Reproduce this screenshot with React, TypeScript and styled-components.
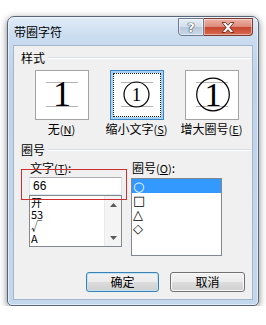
import React from 'react';
import styled, { createGlobalStyle } from 'styled-components';

const Global = createGlobalStyle`
  html, body { margin: 0; padding: 0; background: #fff; }
  body {
    font-family: "Noto Sans CJK SC", "Liberation Sans", sans-serif;
    font-size: 12px;
    color: #000;
  }
  * { box-sizing: border-box; }
`;

const Page = styled.div`
  padding: 16px 0 0 7px;
`;

const Window = styled.div`
  width: 252px;
  height: 290px;
  border: 1px solid #56657a;
  border-radius: 7px 7px 5px 5px;
  background: linear-gradient(180deg, #e0ebf7 0px, #cadcf0 20px, #bed3ea 60px, #c3d7ed 100%);
  box-shadow: 0 2px 7px rgba(0, 0, 0, 0.5), inset 0 0 0 1px rgba(255, 255, 255, 0.55);
  display: flex;
  flex-direction: column;
  padding: 0 5px 5px 5px;
`;

const TitleBar = styled.div`
  height: 28px;
  display: flex;
  align-items: flex-start;
`;

const Title = styled.div`
  margin: 7px 0 0 1px;
  line-height: 16px;
  font-size: 12px;
  color: #000;
`;

const Caption = styled.div`
  margin: 1px 0 0 auto;
  display: flex;
`;

const CapButton = styled.div<{ $kind: 'help' | 'close' }>`
  height: 18px;
  width: ${p => (p.$kind === 'help' ? 26 : 49)}px;
  border: 1px solid ${p => (p.$kind === 'help' ? '#6b7c90' : '#7d3a30')};
  border-left-width: ${p => (p.$kind === 'help' ? 1 : 0)}px;
  border-radius: ${p => (p.$kind === 'help' ? '0 0 0 4px' : '0 0 4px 0')};
  background: ${p =>
    p.$kind === 'help'
      ? 'linear-gradient(180deg, #e6edf5 0%, #d3dee9 50%, #b8c8da 50%, #c9d8e8 100%)'
      : 'linear-gradient(180deg, #eab1a5 0%, #dd8a79 50%, #c7452e 50%, #d66a50 100%)'};
  box-shadow: inset 0 0 0 1px rgba(255, 255, 255, 0.45);
  display: flex;
  align-items: center;
  justify-content: center;
  font-family: "DejaVu Sans", sans-serif;
  font-weight: bold;
  font-size: 13px;
  line-height: 1;
  color: #fff;
  text-shadow: 0 0 1px #2f3d50, 0 0 1px #2f3d50, 0 0 1px #2f3d50;
`;

const Client = styled.div`
  flex: 1;
  background: #f0f0f0;
  border: 1px solid #a3b6cb;
  display: flex;
  flex-direction: column;
  padding: 0 0 7px 0;
`;

const SectionHeader = styled.div<{ $top: number }>`
  margin-top: ${p => p.$top}px;
  padding-left: 7px;
  margin-right: 1px;
  display: flex;
  align-items: center;
  gap: 3px;
  line-height: 16px;
  &::after {
    content: '';
    flex: 1;
    height: 0;
    border-top: 1px solid #d5dfe5;
    border-bottom: 1px solid #ffffff;
  }
`;

const StyleRow = styled.div`
  margin-top: 4px;
  padding-left: 10px;
  display: flex;
`;

const StyleCol = styled.div`
  width: 75px;
  display: flex;
  flex-direction: column;
  align-items: center;
`;

const StyleBox = styled.div<{ $selected?: boolean }>`
  width: 54px;
  height: 50px;
  background: #fff;
  border: 1px solid ${p => (p.$selected ? '#3d86c6' : '#a3a3a3')};
  box-shadow: ${p => (p.$selected ? 'inset 0 0 0 2px #a8d2f4' : 'none')};
  outline: ${p => (p.$selected ? '1px dotted #1a1a1a' : 'none')};
  outline-offset: -4px;
  display: flex;
  align-items: center;
  justify-content: center;
`;

const StyleLabel = styled.div`
  margin-top: 1px;
  line-height: 16px;
  white-space: nowrap;
  u { text-decoration: underline; }
`;

const Mn = styled.span`
  font-size: 11px;
`;

const CircleRow = styled.div`
  margin-top: 2px;
  padding-left: 15px;
  display: flex;
  gap: 9px;
  align-items: flex-start;
`;

const FieldCol = styled.div<{ $w: number }>`
  position: relative;
  width: ${p => p.$w}px;
  display: flex;
  flex-direction: column;
`;

const FieldLabel = styled.div`
  line-height: 16px;
  padding-left: 1px;
`;

const TextInput = styled.div`
  margin-top: 1px;
  height: 18px;
  border: 1px solid #abadb3;
  border-right-color: #dbdfe6;
  border-bottom-color: #e3e9ef;
  border-left-color: #e2e3ea;
  background: #fff;
  padding-left: 3px;
  line-height: 16px;
  font-family: "Liberation Sans", sans-serif;
  font-size: 12px;
`;

const ListBox = styled.div<{ $h: number; $top: number }>`
  margin-top: ${p => p.$top}px;
  height: ${p => p.$h}px;
  border: 1px solid #828790;
  background: #fff;
  display: flex;
  overflow: hidden;
`;

const Items = styled.div`
  flex: 1;
  display: flex;
  flex-direction: column;
`;

const Item = styled.div<{ $h: number; $selected?: boolean }>`
  height: ${p => p.$h}px;
  line-height: ${p => p.$h}px;
  padding-left: 1px;
  font-size: 11px;
  white-space: nowrap;
  background: ${p => (p.$selected ? '#3399ff' : 'transparent')};
  color: ${p => (p.$selected ? '#fff' : '#000')};
`;

const Sym = styled.span`
  font-family: "DejaVu Sans", sans-serif;
  font-size: 13px;
`;

const ScrollBar = styled.div`
  width: 17px;
  background: #f4f4f4;
  border-left: 1px solid #eaeaea;
  display: flex;
  flex-direction: column;
  justify-content: space-between;
`;

const ScrollBtn = styled.div`
  height: 17px;
  display: flex;
  align-items: center;
  justify-content: center;
`;

const Annotation = styled.div`
  position: absolute;
  left: -8px;
  top: 9px;
  width: 106px;
  height: 31px;
  border: 1px solid #cf2f2f;
  pointer-events: none;
`;

const ButtonRow = styled.div`
  margin-top: auto;
  padding-right: 7px;
  display: flex;
  justify-content: flex-end;
  gap: 11px;
`;

const Button = styled.div<{ $w: number; $default?: boolean }>`
  width: ${p => p.$w}px;
  height: 20px;
  border: 1px solid ${p => (p.$default ? '#3c7fb1' : '#707070')};
  border-radius: 3px;
  background: linear-gradient(180deg, #f2f2f2 0%, #ebebeb 50%, #dddddd 50%, #cfcfcf 100%);
  box-shadow: inset 0 0 0 1px ${p => (p.$default ? '#bfe4f7' : '#fafafa')};
  display: flex;
  align-items: center;
  justify-content: center;
  line-height: 16px;
`;

const Preview: React.FC<{ kind: 'none' | 'small' | 'big' }> = ({ kind }) => (
  <svg width="52" height="48" viewBox="0 0 52 48">
    <line x1="10" y1="11.5" x2="42" y2="11.5" stroke="#b4b4b4" strokeWidth="1" />
    <line x1="10" y1="35.5" x2="42" y2="35.5" stroke="#b4b4b4" strokeWidth="1" />
    {kind === 'small' && <circle cx="25.5" cy="23.5" r="12.5" fill="none" stroke="#000" strokeWidth="1.2" />}
    {kind === 'big' && <circle cx="27" cy="23.5" r="16.3" fill="none" stroke="#000" strokeWidth="1.2" />}
    <text
      x={kind === 'big' ? 27 : kind === 'small' ? 25.5 : 26}
      y={kind === 'small' ? 29.5 : kind === 'big' ? 34.5 : 35}
      textAnchor="middle"
      fontFamily="Liberation Serif, serif"
      fontSize={kind === 'small' ? 19 : kind === 'big' ? 34 : 36}
      fill="#000"
    >
      1
    </text>
  </svg>
);

const Arrow: React.FC<{ up?: boolean }> = ({ up }) => (
  <svg width="7" height="4" viewBox="0 0 7 4">
    <path d={up ? 'M0 4 L3.5 0 L7 4 Z' : 'M0 0 L3.5 4 L7 0 Z'} fill="#5a5a5a" />
  </svg>
);

const CloseGlyph: React.FC = () => (
  <svg width="14" height="11" viewBox="0 0 14 11">
    <path
      d="M1 0.5 H4.5 L7 3.3 L9.5 0.5 H13 L8.8 5.5 L13 10.5 H9.5 L7 7.7 L4.5 10.5 H1 L5.2 5.5 Z"
      fill="#fff"
      stroke="#6b2a20"
      strokeWidth="0.9"
      strokeLinejoin="round"
    />
  </svg>
);

export default function App() {
  return (
    <>
      <Global />
      <Page>
        <Window>
          <TitleBar>
            <Title>带圈字符</Title>
            <Caption>
              <CapButton $kind="help">?</CapButton>
              <CapButton $kind="close">
                <CloseGlyph />
              </CapButton>
            </Caption>
          </TitleBar>
          <Client>
            <SectionHeader $top={4}>样式</SectionHeader>
            <StyleRow>
              <StyleCol>
                <StyleBox>
                  <Preview kind="none" />
                </StyleBox>
                <StyleLabel>
                  无<Mn>(<u>N</u>)</Mn>
                </StyleLabel>
              </StyleCol>
              <StyleCol>
                <StyleBox $selected>
                  <Preview kind="small" />
                </StyleBox>
                <StyleLabel>
                  缩小文字<Mn>(<u>S</u>)</Mn>
                </StyleLabel>
              </StyleCol>
              <StyleCol>
                <StyleBox>
                  <Preview kind="big" />
                </StyleBox>
                <StyleLabel>
                  增大圈号<Mn>(<u>E</u>)</Mn>
                </StyleLabel>
              </StyleCol>
            </StyleRow>
            <SectionHeader $top={5}>圈号</SectionHeader>
            <CircleRow>
              <FieldCol $w={93}>
                <FieldLabel>
                  文字<Mn>(<u>T</u>)</Mn>:
                </FieldLabel>
                <TextInput>66</TextInput>
                <ListBox $h={52} $top={0}>
                  <Items>
                    <Item $h={12}>开</Item>
                    <Item $h={12}>53</Item>
                    <Item $h={12}>√</Item>
                    <Item $h={12}>A</Item>
                  </Items>
                  <ScrollBar>
                    <ScrollBtn>
                      <Arrow up />
                    </ScrollBtn>
                    <ScrollBtn>
                      <Arrow />
                    </ScrollBtn>
                  </ScrollBar>
                </ListBox>
                <Annotation />
              </FieldCol>
              <FieldCol $w={91}>
                <FieldLabel>
                  圈号<Mn>(<u>O</u>)</Mn>:
                </FieldLabel>
                <ListBox $h={78} $top={2}>
                  <Items>
                    <Item $h={14} $selected>
                      <Sym>○</Sym>
                    </Item>
                    <Item $h={14}>
                      <Sym>□</Sym>
                    </Item>
                    <Item $h={14}>
                      <Sym>△</Sym>
                    </Item>
                    <Item $h={14}>
                      <Sym>◇</Sym>
                    </Item>
                  </Items>
                </ListBox>
              </FieldCol>
            </CircleRow>
            <ButtonRow>
              <Button $w={73} $default>
                确定
              </Button>
              <Button $w={75}>取消</Button>
            </ButtonRow>
          </Client>
        </Window>
      </Page>
    </>
  );
}
